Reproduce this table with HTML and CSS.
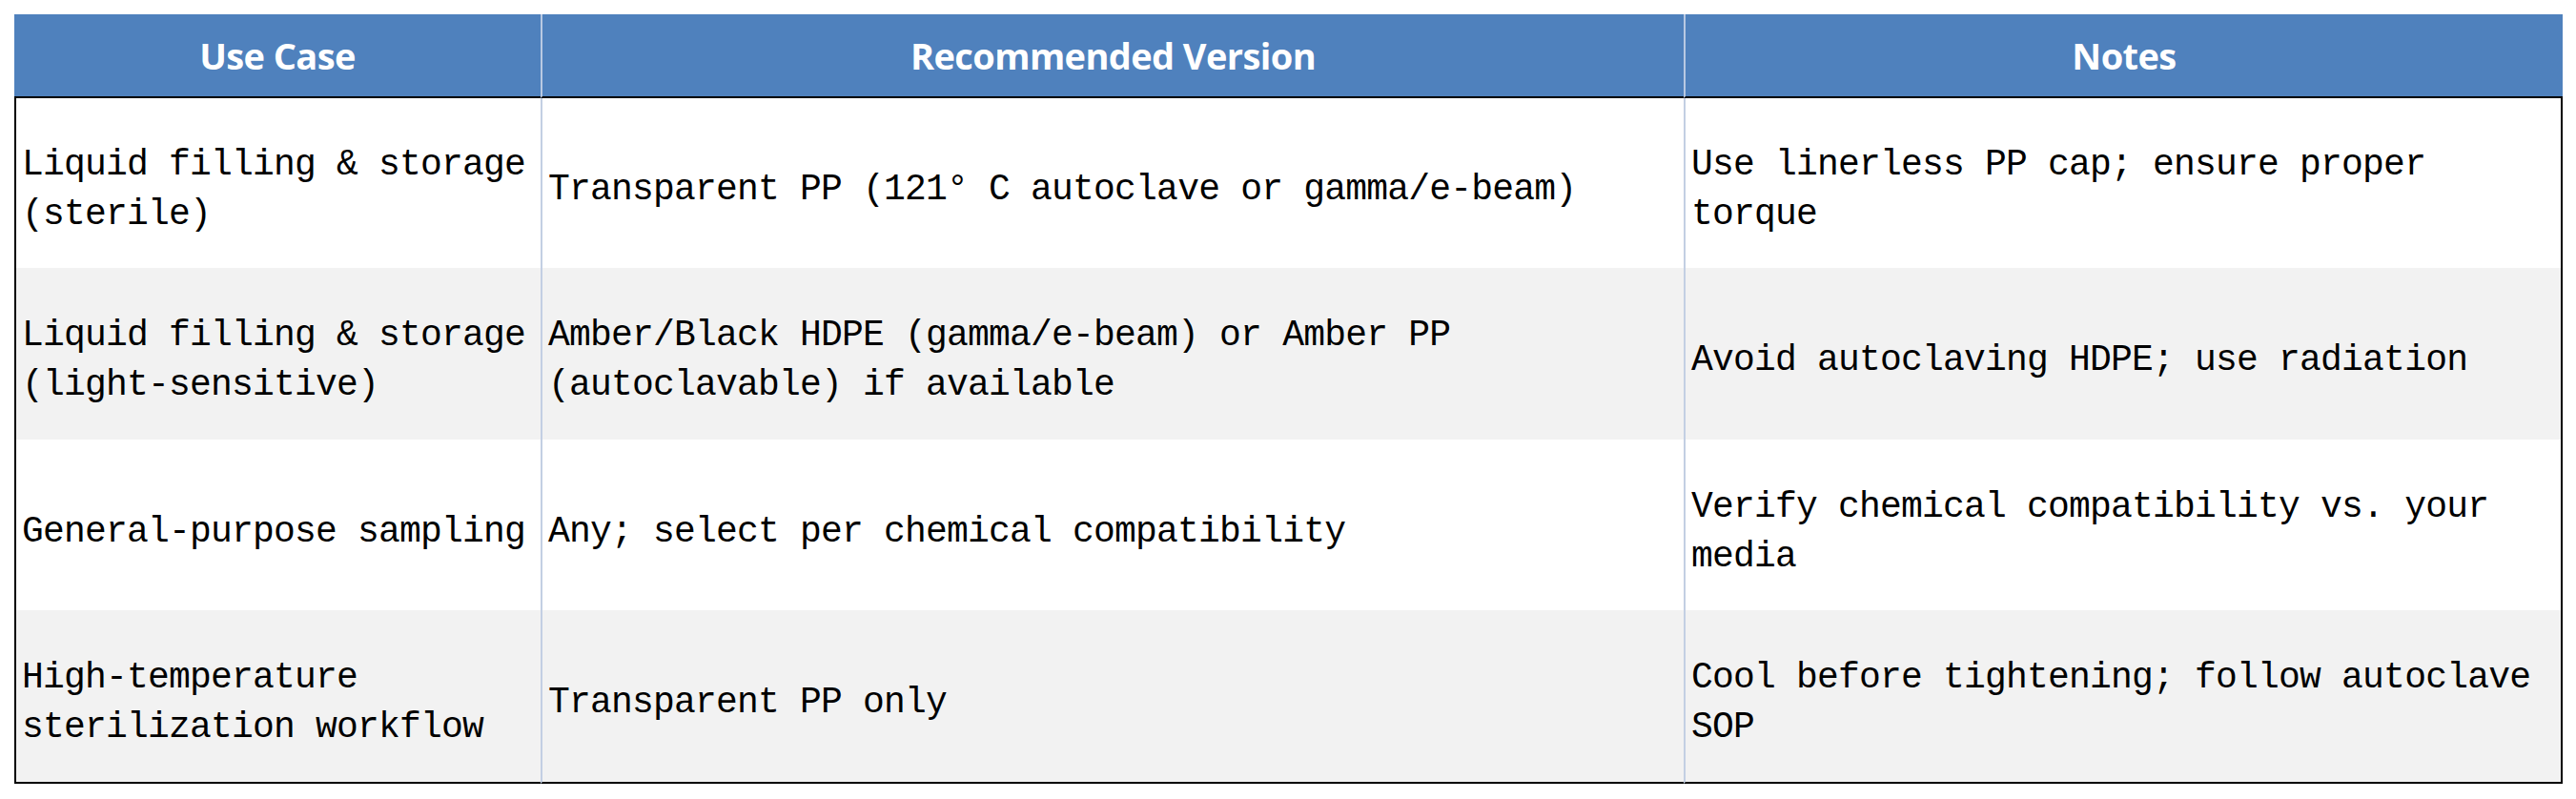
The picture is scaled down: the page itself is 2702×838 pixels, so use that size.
FILE: index.html
```html
<!DOCTYPE html>
<html lang="en">
<head>
<meta charset="utf-8">
<title>Use Case Table</title>
<link rel="stylesheet" href="styles.css">
</head>
<body>
<div class="page">
  <div class="grid">
    <div class="th first"><span>Use Case</span></div>
    <div class="th"><span>Recommended Version</span></div>
    <div class="th"><span>Notes</span></div>

    <div class="td first"><div class="txt">Liquid filling &amp; storage (sterile)</div></div>
    <div class="td"><div class="txt">Transparent PP (121<span class="deg">°</span>C autoclave or gamma/e-beam)</div></div>
    <div class="td endcol"><div class="txt">Use linerless PP cap; ensure proper torque</div></div>

    <div class="td first alt"><div class="txt">Liquid filling &amp; storage (light-sensitive)</div></div>
    <div class="td alt"><div class="txt">Amber/Black HDPE (gamma/e-beam) or Amber PP (autoclavable) if available</div></div>
    <div class="td endcol alt"><div class="txt">Avoid autoclaving HDPE; use radiation</div></div>

    <div class="td first"><div class="txt">General-purpose sampling</div></div>
    <div class="td"><div class="txt">Any; select per chemical compatibility</div></div>
    <div class="td endcol"><div class="txt">Verify chemical compatibility vs. your media</div></div>

    <div class="td first alt endrow"><div class="txt">High-temperature sterilization workflow</div></div>
    <div class="td alt endrow"><div class="txt">Transparent PP only</div></div>
    <div class="td endcol alt endrow"><div class="txt">Cool before tightening; follow autoclave SOP</div></div>
  </div>
</div>
</body>
</html>
```

FILE: styles.css
```css
html, body {
  margin: 0;
  padding: 0;
  background: #ffffff;
}

.page {
  padding: 15px 0 0 15px;
}

.grid {
  display: grid;
  grid-template-columns: 552px 1199px 922px;
  grid-template-rows: 88px 178px 180px 179px 182px;
}

.th {
  box-sizing: border-box;
  background: #4f81bd;
  color: #ffffff;
  font-family: "Open Sans", "Noto Sans", sans-serif;
  font-weight: 700;
  font-size: 38px;
  letter-spacing: -0.6px;
  display: flex;
  align-items: center;
  justify-content: center;
  border-bottom: 2px solid #000000;
  border-left: 2px solid #b9c9e2;
}

.th.first {
  border-left: none;
}

.td {
  box-sizing: border-box;
  background: #ffffff;
  color: #000000;
  font-family: "Liberation Mono", "DejaVu Sans Mono", monospace;
  font-size: 38px;
  line-height: 52px;
  letter-spacing: -0.8px;
  padding: 14px 6px 0 6px;
  display: flex;
  align-items: center;
  border-left: 2px solid #c3cfe3;
}

.td.first {
  border-left: 2px solid #000000;
}

.td.endcol {
  border-right: 2px solid #000000;
}

.td.endrow {
  border-bottom: 2px solid #000000;
}

.td.alt {
  background: #f2f2f2;
}

.txt {
  min-width: 0;
}

.deg {
  letter-spacing: 21.2px;
}
```
